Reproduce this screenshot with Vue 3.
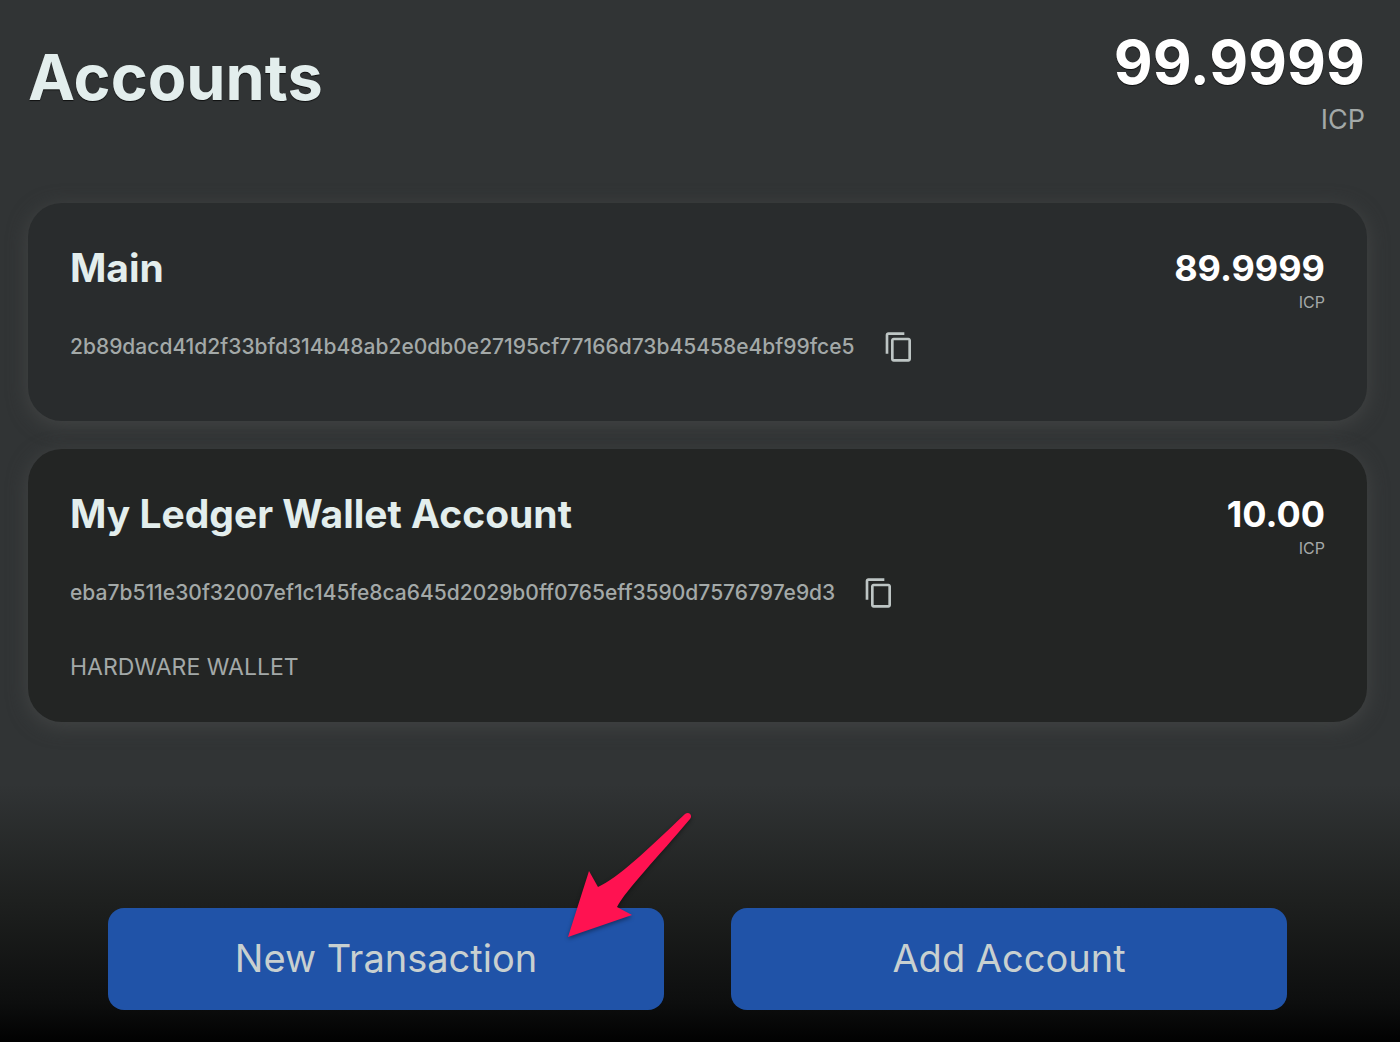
<script setup>
const accounts = [
  {
    name: 'Main',
    amount: '89.9999',
    id: '2b89dacd41d2f33bfd314b48ab2e0db0e27195cf77166d73b45458e4bf99fce5',
    hardware: false,
  },
  {
    name: 'My Ledger Wallet Account',
    amount: '10.00',
    id: 'eba7b511e30f32007ef1c145fe8ca645d2029b0ff0765eff3590d7576797e9d3',
    hardware: true,
  },
]

const copy = (text) => navigator.clipboard?.writeText(text)
</script>

<template>
  <div class="page">
    <main class="content">
      <header class="summary">
        <h1 class="title">Accounts</h1>
        <p class="total">
          <span class="total-amount">99.9999</span>
          <span class="total-unit">ICP</span>
        </p>
      </header>

      <section class="cards">
        <article
          v-for="account in accounts"
          :key="account.id"
          class="card"
          :class="{ hardware: account.hardware }"
        >
          <div class="card-head">
            <h2 class="name">{{ account.name }}</h2>
            <p class="balance">
              <span class="amount">{{ account.amount }}</span>
              <span class="unit">ICP</span>
            </p>
          </div>
          <div class="identifier">
            <span>{{ account.id }}</span>
            <button class="copy" type="button" aria-label="Copy account identifier" @click="copy(account.id)">
              <svg viewBox="0 0 24 24" width="32" height="32" fill="currentColor" aria-hidden="true">
                <path d="M16 1H4c-1.1 0-2 .9-2 2v14h2V3h12V1zm3 4H8c-1.1 0-2 .9-2 2v14c0 1.1.9 2 2 2h11c1.1 0 2-.9 2-2V7c0-1.1-.9-2-2-2zm0 16H8V7h11v14z" />
              </svg>
            </button>
          </div>
          <p v-if="account.hardware" class="kind">HARDWARE WALLET</p>
        </article>
      </section>
    </main>

    <footer class="toolbar">
      <div class="action">
        <button class="primary" type="button">New Transaction</button>
        <svg class="pointer" viewBox="0 0 124 126" width="124" height="126" aria-hidden="true">
          <path d="M0 125 L21 59 L30 75 C50 66 78 39 117 2 C121 -1 125 3 122 7 C90 45 58 78 49 95 L64 103 Z" fill="#ff1251" />
        </svg>
      </div>
      <div class="action">
        <button class="primary" type="button">Add Account</button>
      </div>
    </footer>
  </div>
</template>

<style>
body {
  margin: 0;
  background: #313435;
}
</style>

<style scoped>
.page {
  display: flex;
  flex-direction: column;
  min-height: 100vh;
  background: #313435;
  color: #a3a9a8;
  font-family: Inter, "Liberation Sans", sans-serif;
}

h1,
h2,
p {
  margin: 0;
}

.content {
  padding: 30px 33px 0 28px;
}

.summary {
  display: flex;
  justify-content: space-between;
  padding: 0 2px 0 0;
}

.title {
  padding-top: 7px;
  color: #e3eeed;
  font-size: 63px;
  line-height: 80px;
  font-weight: 700;
  text-shadow: 0 1px 1px rgba(0, 0, 0, 0.7);
}

.total {
  display: flex;
  flex-direction: column;
  align-items: flex-end;
}

.total-amount {
  color: #fff;
  font-size: 60px;
  line-height: 64px;
  font-weight: 700;
  text-shadow: 0 1px 1px rgba(0, 0, 0, 0.7);
}

.total-unit {
  font-size: 27px;
  line-height: 52px;
}

.cards {
  display: flex;
  flex-direction: column;
  gap: 28px;
  margin-top: 57px;
}

.card {
  min-height: 218px;
  box-sizing: border-box;
  padding: 41px 42px 39px;
  border-radius: 34px;
  background: #292c2d;
  box-shadow: 0 4px 20px #434545;
}

.card.hardware {
  background: #232524;
}

.card-head {
  display: flex;
  justify-content: space-between;
}

.name {
  color: #e3eeed;
  font-size: 39px;
  line-height: 48px;
  font-weight: 700;
}

.balance {
  display: flex;
  flex-direction: column;
  align-items: flex-end;
}

.amount {
  color: #fff;
  font-size: 36px;
  line-height: 48px;
  font-weight: 700;
}

.unit {
  font-size: 16px;
  line-height: 20px;
}

.identifier {
  display: flex;
  align-items: center;
  gap: 28px;
  margin-top: 19px;
  font-size: 21px;
  line-height: 32px;
  font-weight: 500;
}

.copy {
  display: flex;
  padding: 0;
  border: 0;
  background: none;
  color: #bdc5c4;
  cursor: pointer;
}

.kind {
  margin-top: 42px;
  font-size: 23px;
  line-height: 32px;
}

.toolbar {
  display: flex;
  gap: 67px;
  margin-top: auto;
  padding: 124px 113px 32px 108px;
  background: linear-gradient(to bottom, #313435, #1e201f 45%, #0d0e0e 85%, #010101);
}

.action {
  position: relative;
  flex: 1;
}

.primary {
  width: 100%;
  height: 102px;
  border: 0;
  border-radius: 16px;
  background: #2053a8;
  color: #c8d0d0;
  font-family: inherit;
  font-size: 38px;
  line-height: 48px;
  padding: 0 0 2px;
  cursor: pointer;
}

.pointer {
  position: absolute;
  top: -96px;
  right: -28px;
  filter: drop-shadow(0 2px 2px rgba(0, 0, 0, 0.4));
  pointer-events: none;
}
</style>
